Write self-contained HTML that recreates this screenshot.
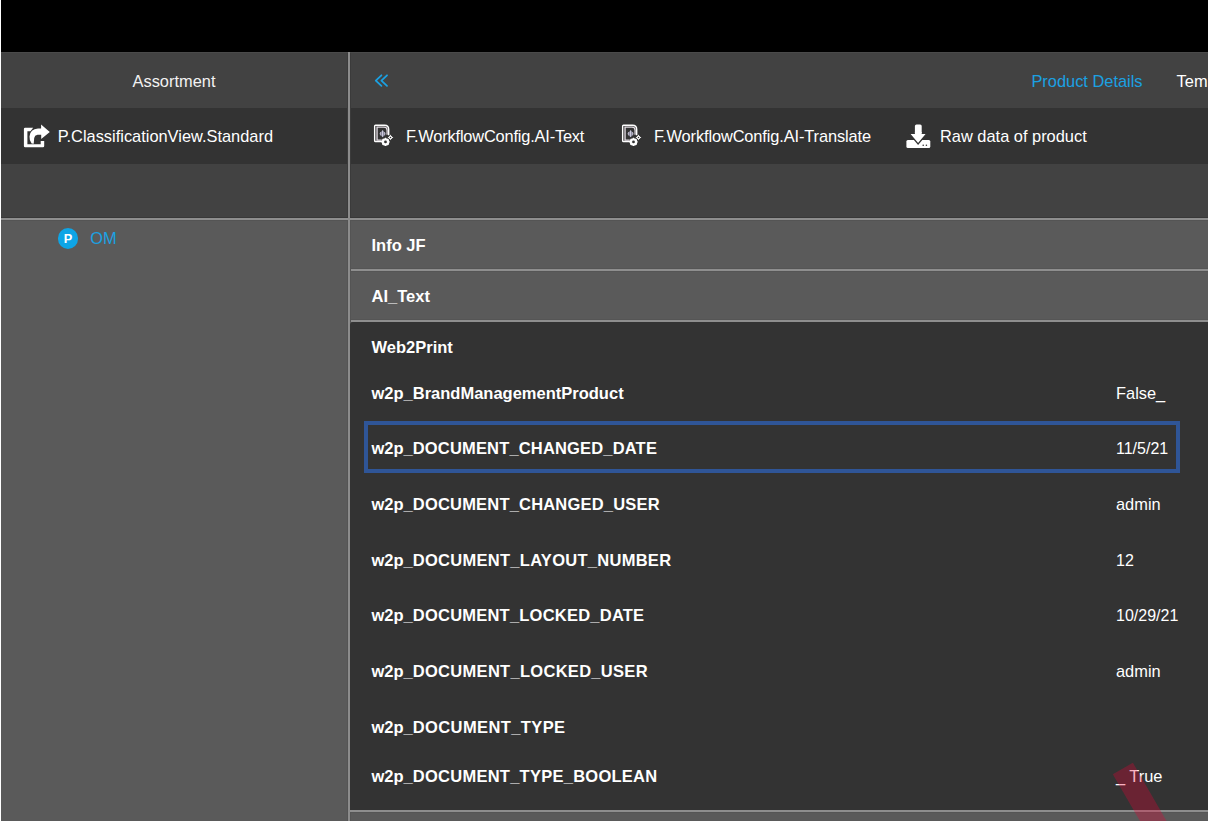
<!DOCTYPE html>
<html><head><meta charset="utf-8">
<style>
html,body{margin:0;padding:0;width:1208px;height:821px;overflow:hidden;background:#5a5a5a;}
body{position:relative;font-family:"Liberation Sans",sans-serif;color:#fff;}
.a{position:absolute;}
.t{position:absolute;font-size:16.4px;line-height:20px;white-space:nowrap;}
.b{position:absolute;font-size:16.5px;line-height:20px;font-weight:bold;white-space:nowrap;}
svg{position:absolute;overflow:visible;}
</style></head><body>
<!-- backgrounds -->
<div class="a" style="left:0;top:0;width:1208px;height:52px;background:#000"></div>
<div class="a" style="left:0;top:52px;width:1208px;height:56px;background:#424242"></div>
<div class="a" style="left:0;top:52px;width:1208px;height:1px;background:#4a4a4a"></div>
<div class="a" style="left:0;top:108px;width:1208px;height:56px;background:#333"></div>
<div class="a" style="left:0;top:164px;width:1208px;height:54px;background:#424242"></div>
<div class="a" style="left:0;top:217px;width:1208px;height:1px;background:#383838"></div>
<div class="a" style="left:0;top:218px;width:1208px;height:2px;background:#8e8e8e"></div>
<!-- right panel rows -->
<div class="a" style="left:350px;top:269px;width:858px;height:2px;background:#8e8e8e"></div>
<div class="a" style="left:350px;top:320px;width:858px;height:2px;background:#8e8e8e"></div>
<div class="a" style="left:350px;top:322px;width:858px;height:488px;background:#333;border-top-left-radius:3px"></div>
<div class="a" style="left:350px;top:810px;width:858px;height:2px;background:#8e8e8e"></div>
<!-- subtle edge shading -->
<div class="a" style="left:0;top:220px;width:1208px;height:1px;background:#545454"></div>
<div class="a" style="left:350px;top:268px;width:858px;height:1px;background:#555"></div>
<div class="a" style="left:350px;top:271px;width:858px;height:1px;background:#555"></div>
<div class="a" style="left:350px;top:319px;width:858px;height:1px;background:#555"></div>
<div class="a" style="left:350px;top:812px;width:858px;height:1px;background:#555"></div>
<div class="a" style="left:347px;top:53px;width:1px;height:164px;background:#3b3b3b"></div>
<div class="a" style="left:350px;top:53px;width:1px;height:164px;background:#3b3b3b"></div>
<div class="a" style="left:347px;top:220px;width:1px;height:601px;background:#545454"></div>
<div class="a" style="left:350px;top:220px;width:1px;height:102px;background:#545454"></div>
<div class="a" style="left:350px;top:812px;width:1px;height:9px;background:#545454"></div>
<!-- vertical divider -->
<div class="a" style="left:348px;top:52px;width:2px;height:769px;background:#8c8c8c"></div>
<!-- left white edge -->
<div class="a" style="left:0;top:0;width:1px;height:821px;background:#fff"></div>

<!-- header -->
<div class="t" style="left:0;top:71px;width:348px;text-align:center;color:#f2f2f2">Assortment</div>
<svg style="left:0;top:0" width="1" height="1"><polyline points="381.4,75.3 375.8,80.6 381.4,85.9" fill="none" stroke="#1ba1e2" stroke-width="1.8" stroke-linecap="round" stroke-linejoin="round"/><polyline points="387,75.3 381.4,80.6 387,85.9" fill="none" stroke="#1ba1e2" stroke-width="1.8" stroke-linecap="round" stroke-linejoin="round"/></svg>
<div class="t" style="left:1031.4px;top:71px;color:#1ba1e2">Product Details</div>
<div class="t" style="left:1176.6px;top:71px">Template</div>

<!-- toolbar -->
<svg style="left:23px;top:124px" width="28" height="25" viewBox="0 0 28 25">
  <path d="M0.9,5 Q0.9,3.8 2.1,3.8 L10.2,3.8 L7.4,7.3 L4.4,7.3 L4.4,20.2 L17.7,20.2 L17.7,17.05 L21.2,17.05 L21.2,22.1 Q21.2,23.3 20,23.3 L2.1,23.3 Q0.9,23.3 0.9,22.1 Z" fill="#fff"/>
  <path d="M18.1,4.6 L18.1,0.5 L26.8,8.1 L18.2,15.1 L18.2,10.8 L14.5,10.8 Q11.6,11.2 11.2,14 L10.7,19.8 L8.6,19.6 Q6.2,16 6.5,12.5 Q7.2,5 15,4.6 Z" fill="#fff"/>
</svg>
<div class="t" style="left:57.7px;top:126px">P.ClassificationView.Standard</div>

<svg style="left:368px;top:120px" width="30" height="30" viewBox="0 0 30 30">
  <path d="M14.2,21.55 L7.5,21.55 Q6.65,21.55 6.65,20.7 L6.65,6.1 Q6.65,5.3 7.5,5.3 L16.5,5.3 Q20.7,5.3 20.7,9.5 L20.7,15.3" fill="none" stroke="#fff" stroke-width="1.4"/>
  <path d="M13.8,20.1 L9.05,20.1 L9.05,7.1 L16,7.1 Q19.1,7.1 19.1,10.2 L19.1,14.8" fill="none" stroke="#e4dde4" stroke-width="1.3"/>
  <path d="M11.2,13.7 L14.6,10.2 L17.9,13.7 L14.6,17.2 Z" fill="#85839a"/>
  <path d="M14.6,10.6 L14.6,16.8" stroke="#d0d0e0" stroke-width="1.1"/>
  <path d="M12.6,12 L12.6,15.4 M16.6,12 L16.6,15.4" stroke="#c8c4d0" stroke-width="0.8"/>
  <g transform="translate(17.5,21.9)">
    <circle r="2.7" fill="none" stroke="#fff" stroke-width="2.1"/>
    <path d="M0,-4.1 L0,4.1 M-4.1,0 L4.1,0 M-2.9,-2.9 L2.9,2.9 M-2.9,2.9 L2.9,-2.9" stroke="#fff" stroke-width="1.2"/>
    <circle r="1.4" fill="#333"/>
  </g>
  <g transform="translate(22.5,17.4)">
    <path d="M0,-2.9 L1,-1 L2.9,0 L1,1 L0,2.9 L-1,1 L-2.9,0 L-1,-1 Z" fill="#fff"/>
    <circle r="1.6" fill="#fff"/>
    <circle r="0.75" fill="#333"/>
  </g>
</svg>
<div class="t" style="left:406px;top:126px;letter-spacing:-0.19px">F.WorkflowConfig.AI-Text</div>

<svg style="left:616px;top:120px" width="30" height="30" viewBox="0 0 30 30">
  <path d="M14.2,21.55 L7.5,21.55 Q6.65,21.55 6.65,20.7 L6.65,6.1 Q6.65,5.3 7.5,5.3 L16.5,5.3 Q20.7,5.3 20.7,9.5 L20.7,15.3" fill="none" stroke="#fff" stroke-width="1.4"/>
  <path d="M13.8,20.1 L9.05,20.1 L9.05,7.1 L16,7.1 Q19.1,7.1 19.1,10.2 L19.1,14.8" fill="none" stroke="#e4dde4" stroke-width="1.3"/>
  <path d="M11.2,13.7 L14.6,10.2 L17.9,13.7 L14.6,17.2 Z" fill="#85839a"/>
  <path d="M14.6,10.6 L14.6,16.8" stroke="#d0d0e0" stroke-width="1.1"/>
  <path d="M12.6,12 L12.6,15.4 M16.6,12 L16.6,15.4" stroke="#c8c4d0" stroke-width="0.8"/>
  <g transform="translate(17.5,21.9)">
    <circle r="2.7" fill="none" stroke="#fff" stroke-width="2.1"/>
    <path d="M0,-4.1 L0,4.1 M-4.1,0 L4.1,0 M-2.9,-2.9 L2.9,2.9 M-2.9,2.9 L2.9,-2.9" stroke="#fff" stroke-width="1.2"/>
    <circle r="1.4" fill="#333"/>
  </g>
  <g transform="translate(22.5,17.4)">
    <path d="M0,-2.9 L1,-1 L2.9,0 L1,1 L0,2.9 L-1,1 L-2.9,0 L-1,-1 Z" fill="#fff"/>
    <circle r="1.6" fill="#fff"/>
    <circle r="0.75" fill="#333"/>
  </g>
</svg>
<div class="t" style="left:654px;top:126px;letter-spacing:-0.12px">F.WorkflowConfig.AI-Translate</div>

<svg style="left:906px;top:124px" width="25" height="25" viewBox="0 0 25 25">
  <rect x="0.4" y="16" width="23.9" height="7.9" rx="1.5" fill="#fff"/>
  <rect x="8.9" y="0.4" width="6.8" height="11" rx="1.6" fill="#fff"/>
  <path d="M3.3,9.5 L20.9,9.5 L12.1,20 Z" fill="#fff" stroke="#333" stroke-width="1.2" stroke-linejoin="miter"/>
  <rect x="8.9" y="8" width="6.8" height="3.5" fill="#fff"/>
  <circle cx="17.2" cy="21.3" r="0.8" fill="#333"/>
  <circle cx="20.4" cy="21.3" r="0.8" fill="#333"/>
</svg>
<div class="t" style="left:940px;top:126px">Raw data of product</div>

<!-- left tree -->
<div class="a" style="left:57.5px;top:228px;width:20.5px;height:20.5px;border-radius:50%;background:#0ea5e6"></div>
<div class="a" style="left:63.8px;top:229px;font-size:12.8px;line-height:20px;font-weight:bold">P</div>
<div class="t" style="left:90.3px;top:228px;color:#1ba1e2">OM</div>

<!-- right content -->
<div class="b" style="left:371.5px;top:235px">Info JF</div>
<div class="b" style="left:371.5px;top:286px">AI_Text</div>
<div class="b" style="left:371.5px;top:337px">Web2Print</div>

<div class="b" style="left:371.5px;top:383px">w2p_BrandManagementProduct</div>
<div class="t" style="left:1116px;top:383px">False_</div>

<div class="a" style="left:364px;top:421px;width:808px;height:44px;border:4px solid #2f5597"></div>
<div class="b" style="left:371.5px;top:438px">w2p_<span style="letter-spacing:0.165px">DOCUMENT_CHANGED_DAT</span>E</div>
<div class="t" style="left:1116px;top:439px;font-size:16px">11/5/21</div>

<div class="b" style="left:371.5px;top:494px">w2p_<span style="letter-spacing:0.195px">DOCUMENT_CHANGED_USE</span>R</div>
<div class="t" style="left:1116px;top:494px">admin</div>

<div class="b" style="left:371.5px;top:550px">w2p_<span style="letter-spacing:0.28px">DOCUMENT_LAYOUT_NUMBE</span>R</div>
<div class="t" style="left:1116px;top:551px;font-size:16px">12</div>

<div class="b" style="left:371.5px;top:605px">w2p_<span style="letter-spacing:0.226px">DOCUMENT_LOCKED_DAT</span>E</div>
<div class="t" style="left:1116px;top:606px;font-size:16px">10/29/21</div>

<div class="b" style="left:371.5px;top:661px">w2p_<span style="letter-spacing:0.295px">DOCUMENT_LOCKED_USE</span>R</div>
<div class="t" style="left:1116px;top:661px">admin</div>

<div class="b" style="left:371.5px;top:716.5px">w2p_<span style="letter-spacing:0.39px">DOCUMENT_TYP</span>E</div>

<div class="b" style="left:371.5px;top:766px">w2p_<span style="letter-spacing:0.255px">DOCUMENT_TYPE_BOOLEA</span>N</div>
<div class="t" style="left:1116px;top:766px">_ True</div>

<!-- ribbon -->
<svg style="left:0;top:0" width="1208" height="821"><polygon points="1112.8,774.3 1132.9,762.7 1200,879 1180,890" fill="rgba(234,0,54,0.3)"/></svg>
</body></html>
